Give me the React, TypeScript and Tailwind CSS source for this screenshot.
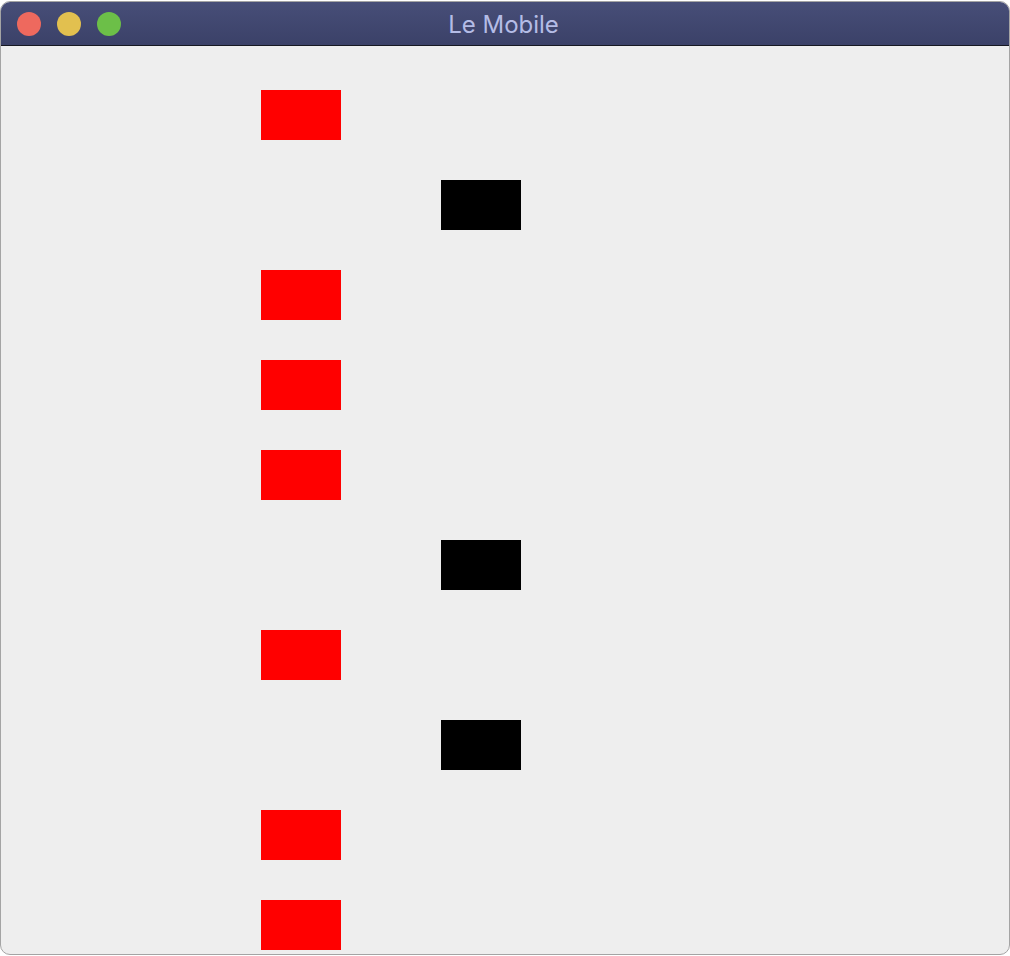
const rows: ('red' | 'black')[] = ['red', 'black', 'red', 'red', 'red', 'black', 'red', 'black', 'red', 'red'];

export default function App() {
  return (
    <div className="w-[1010px] h-[956px] bg-white pt-[1px]">
      <div className="w-full h-[954px] rounded-[10px] border border-[#a4a4a4] overflow-hidden flex flex-col bg-[#eeeeee]">
        {/* title bar */}
        <div className="relative h-[44px] shrink-0 border-b border-[#161822] bg-gradient-to-b from-[#474e78] to-[#3b4168] flex items-center">
          <div className="flex items-center gap-[16px] pl-[16px]">
            <div className="w-[24px] h-[24px] rounded-full bg-[#ee695e]" />
            <div className="w-[24px] h-[24px] rounded-full bg-[#e2c04f]" />
            <div className="w-[24px] h-[24px] rounded-full bg-[#6cbf48]" />
          </div>
          <div className="absolute inset-0 flex items-center justify-center text-[24px] text-[#b4bce6] font-['Inter',sans-serif] pr-[3px] pt-[2px]">
            Le Mobile
          </div>
        </div>
        {/* content */}
        <div className="flex flex-col gap-[40px] pt-[44px]">
          {rows.map((c, i) => (
            <div key={i} className="h-[50px] flex">
              {c === 'red' ? (
                <div className="ml-[260px] w-[80px] h-[50px] bg-[#ff0000]" />
              ) : (
                <div className="ml-[440px] w-[80px] h-[50px] bg-black" />
              )}
            </div>
          ))}
        </div>
      </div>
    </div>
  );
}
